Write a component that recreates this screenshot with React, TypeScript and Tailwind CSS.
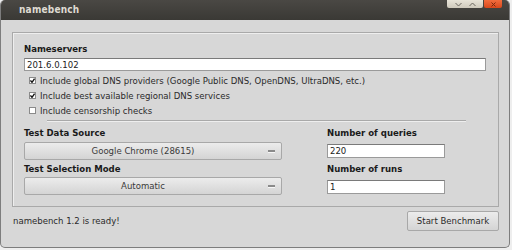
import React from "react";

const font = { fontFamily: '"DejaVu Sans Condensed", "DejaVu Sans", sans-serif' };

function Check({ checked, label }: { checked: boolean; label: string }) {
  return (
    <div className="flex items-center h-[15px] pl-[5px]">
      <div className="w-[7px] h-[7px] bg-white border border-[#8a8a8a] flex items-center justify-center shrink-0">
        {checked && (
          <svg width="5" height="5" viewBox="0 0 5 5">
            <path d="M0.4 2.4 L2 4.3 L4.6 0.6" stroke="#111" strokeWidth="1.4" fill="none" />
          </svg>
        )}
      </div>
      <span className="ml-[4px] text-[9.5px] text-[#2a2a2a] leading-none">{label}</span>
    </div>
  );
}

function Dropdown({ value }: { value: string }) {
  return (
    <div className="relative w-[258px] h-[18px] border border-[#a8a8a8] rounded-[2px] bg-gradient-to-b from-[#ececec] to-[#d4d4d4] flex items-center justify-center pr-[20px]">
      <span className="text-[9.5px] text-[#3a3a3a] leading-none">{value}</span>
      <div className="absolute right-[6px] top-[7px] w-[7px] h-[2px] bg-[#8a8a8a] border-b border-[#f6f6f6] box-content" />
    </div>
  );
}

function Field({ value, w, h }: { value: string; w: string; h: string }) {
  return (
    <div className={`${w} ${h} bg-white border border-[#9a9a9a] border-t-[#7a7a7a] flex items-center pl-[2px]`}>
      <span className="text-[9.5px] text-[#222] leading-none">{value}</span>
    </div>
  );
}

export default function App() {
  return (
    <div className="w-[512px] h-[250px] bg-[#eeeeee] overflow-hidden" style={font}>
      <div className="w-[510px] h-[248px] bg-[#d7d7d7] rounded-t-[5px] rounded-b-[5px] border border-[#7d7d7d] border-t-0 flex flex-col overflow-hidden">
        {/* title bar */}
        <div className="relative h-[20px] shrink-0 bg-gradient-to-b from-[#4a4844] to-[#3a3935] flex items-center pl-[18px]">
          <span className="text-[10px] font-bold text-[#dfdbd2] leading-none tracking-[0.2px]">namebench</span>
          <div className="absolute top-0 right-[26px] w-[36px] h-[8px] bg-gradient-to-b from-[#e8e4d8] to-[#cfcabc] rounded-b-[2px] flex items-center justify-around px-[4px]">
            <svg width="7" height="5" viewBox="0 0 7 5"><path d="M0.5 1 L3.5 4 L6.5 1" stroke="#6a665e" strokeWidth="1" fill="none" /></svg>
            <svg width="7" height="5" viewBox="0 0 7 5"><path d="M0.5 4 L3.5 1 L6.5 4" stroke="#6a665e" strokeWidth="1" fill="none" /></svg>
          </div>
          <div className="absolute top-0 right-[7px] w-[18px] h-[8px] bg-gradient-to-b from-[#f26d3d] to-[#d9471a] rounded-b-[2px] flex items-center justify-center">
            <svg width="5" height="5" viewBox="0 0 5 5"><path d="M0.5 0.5 L4.5 4.5 M4.5 0.5 L0.5 4.5" stroke="#7a2a10" strokeWidth="1" fill="none" /></svg>
          </div>
        </div>
        {/* body */}
        <div className="flex-1 pl-[11px] pr-[10px] pt-[12px] flex flex-col">
          <div className="h-[175px] border border-[#a9a9a9] shadow-[inset_1px_1px_0_#eeeeee] pl-[11px] pr-[11px] pt-[9px] flex flex-col">
            <div className="text-[9.5px] font-bold text-[#1a1a1a] leading-none h-[13px] flex items-center">Nameservers</div>
            <div className="mt-[3px]">
              <Field value="201.6.0.102" w="w-[462px]" h="h-[13px]" />
            </div>
            <div className="mt-[2px] flex flex-col">
              <Check checked label="Include global DNS providers (Google Public DNS, OpenDNS, UltraDNS, etc.)" />
              <Check checked label="Include best available regional DNS services" />
              <Check checked={false} label="Include censorship checks" />
            </div>
            <div className="mt-[2px] ml-[23px] w-[419px] h-[2px] border-t border-[#a9a9a9] border-b border-b-[#eeeeee]" />
            <div className="flex mt-[4px]">
              <div className="flex flex-col">
                <div className="text-[9.5px] font-bold text-[#1a1a1a] leading-none h-[14px] flex items-center">Test Data Source</div>
                <div className="mt-[2px]"><Dropdown value="Google Chrome (28615)" /></div>
                <div className="mt-[2px] text-[9.5px] font-bold text-[#1a1a1a] leading-none h-[14px] flex items-center">Test Selection Mode</div>
                <div className="mt-[1px]"><Dropdown value="Automatic" /></div>
              </div>
              <div className="flex flex-col ml-[45px]">
                <div className="text-[9.5px] font-bold text-[#1a1a1a] leading-none h-[14px] flex items-center">Number of queries</div>
                <div className="mt-[4px]"><Field value="220" w="w-[118px]" h="h-[14px]" /></div>
                <div className="mt-[4px] text-[9.5px] font-bold text-[#1a1a1a] leading-none h-[14px] flex items-center">Number of runs</div>
                <div className="mt-[4px]"><Field value="1" w="w-[118px]" h="h-[14px]" /></div>
              </div>
            </div>
          </div>
          <div className="flex items-center justify-between mt-[4px] pl-[1px]">
            <span className="text-[9.5px] text-[#2a2a2a] leading-none">namebench 1.2 is ready!</span>
            <div className="w-[92px] h-[20px] border border-[#a8a8a8] rounded-[2px] bg-gradient-to-b from-[#ececec] to-[#d4d4d4] flex items-center justify-center">
              <span className="text-[9.5px] text-[#2a2a2a] leading-none">Start Benchmark</span>
            </div>
          </div>
        </div>
      </div>
    </div>
  );
}
